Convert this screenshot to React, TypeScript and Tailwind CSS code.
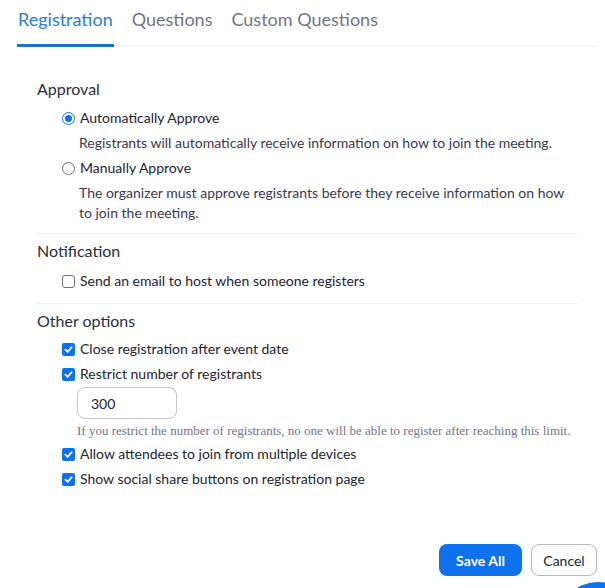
import { useState } from "react";

const Radio = ({ checked }: { checked: boolean }) => (
  <span
    className={
      "flex h-[13px] w-[13px] shrink-0 items-center justify-center rounded-full border " +
      (checked ? "border-[#0e72ed]" : "border-[#6e6e7a]")
    }
  >
    {checked ? <span className="h-[7px] w-[7px] rounded-full bg-[#0e72ed]" /> : null}
  </span>
);

const Check = ({ checked }: { checked: boolean }) =>
  checked ? (
    <span className="flex h-[13px] w-[13px] shrink-0 items-center justify-center rounded-[2px] bg-[#0e72ed]">
      <svg width="9" height="9" viewBox="0 0 10 10" fill="none">
        <path
          d="M1.5 5.2 4 7.6 8.6 2.4"
          stroke="white"
          strokeWidth="1.9"
          strokeLinecap="round"
          strokeLinejoin="round"
        />
      </svg>
    </span>
  ) : (
    <span className="h-[13px] w-[13px] shrink-0 rounded-[3px] border border-[#6e6e7a]" />
  );

const Row = ({
  children,
  box,
  className = "",
}: {
  children: React.ReactNode;
  box: React.ReactNode;
  className?: string;
}) => (
  <div className={"ml-[25px] flex h-5 items-center gap-[5px] " + className}>
    {box}
    <span className="text-[14px] leading-5 text-[#232333]">{children}</span>
  </div>
);

const Section = ({ title }: { title: string }) => (
  <h2 className="text-[16px] leading-6 text-[#2d2d3a]">{title}</h2>
);

const App = () => {
  const [tab] = useState("Registration");
  const tabs = ["Registration", "Questions", "Custom Questions"];

  return (
    <div className="relative h-[588px] overflow-hidden bg-white font-['Lato',sans-serif]">
      <div className="ml-[17px] mr-[8px] flex gap-[17px] border-b-2 border-[#f5f5f7]">
        {tabs.map((t) => (
          <div
            key={t}
            className={
              "-mb-[2px] px-[1px] pt-[7px] pb-[13px] text-[18px] leading-6 " +
              (t === tab
                ? "border-b-[3px] border-[#1e6fd0] text-[#2b7bd8]"
                : "border-b-[3px] border-transparent text-[#747487]")
            }
          >
            {t}
          </div>
        ))}
      </div>

      <div className="pl-[37px] pr-[28px] pt-[30px]">
        <Section title="Approval" />
        <Row box={<Radio checked />} className="mt-[7px]">
          Automatically Approve
        </Row>
        <p className="mt-[5px] ml-[42px] text-[14px] leading-5 text-[#39394d]">
          Registrants will automatically receive information on how to join the meeting.
        </p>
        <Row box={<Radio checked={false} />} className="mt-[5px]">
          Manually Approve
        </Row>
        <p className="mt-[5px] ml-[42px] text-[14px] leading-5 text-[#39394d]">
          The organizer must approve registrants before they receive information on how to join the
          meeting.
        </p>

        <div className="mt-[10px] border-t border-[#ededf0] pt-[5px]">
          <Section title="Notification" />
          <Row box={<Check checked={false} />} className="mt-[8px]">
            Send an email to host when someone registers
          </Row>
        </div>

        <div className="mt-[12px] border-t border-[#ededf0] pt-[5px]">
          <Section title="Other options" />
          <Row box={<Check checked />} className="mt-[6px]">
            Close registration after event date
          </Row>
          <Row box={<Check checked />} className="mt-[5px]">
            Restrict number of registrants
          </Row>
          <input
            defaultValue="300"
            className="mt-[3px] ml-[40px] block h-[32px] w-[100px] rounded-[8px] border border-[#c4c4cc] px-[13px] text-[14px] text-[#232333] outline-none"
          />
          <p className="mt-[4px] ml-[40px] font-['Liberation_Serif',serif] text-[13px] leading-4 text-[#747487]">
            If you restrict the number of registrants, no one will be able to register after reaching
            this limit.
          </p>
          <Row box={<Check checked />} className="mt-[5px]">
            Allow attendees to join from multiple devices
          </Row>
          <Row box={<Check checked />} className="mt-[5px]">
            Show social share buttons on registration page
          </Row>
        </div>
      </div>

      <div className="absolute right-[8px] top-[544px] flex gap-[9px]">
        <button className="h-[32px] w-[83px] rounded-[8px] bg-[#0e72ed] text-[14px] font-bold text-white">
          Save All
        </button>
        <button className="h-[32px] w-[66px] rounded-[8px] border border-[#bababa] bg-white text-[14px] text-[#232333]">
          Cancel
        </button>
      </div>

      <div className="absolute left-[558px] top-[582px] h-[80px] w-[80px] rounded-full bg-[#0e72ed]" />
    </div>
  );
};

export default App;
